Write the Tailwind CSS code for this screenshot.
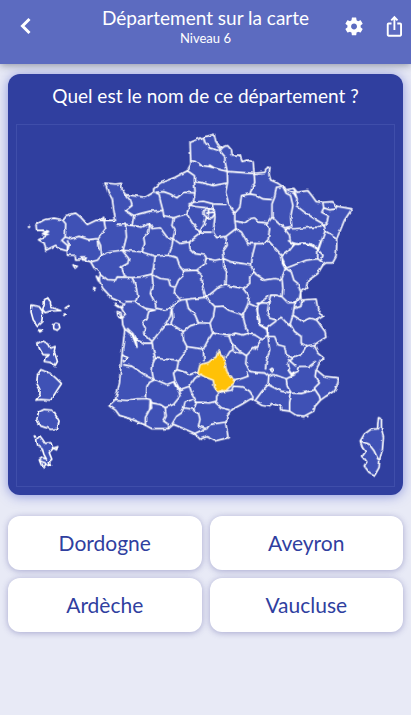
<!DOCTYPE html>
<html lang="fr">
<head>
    <meta charset="UTF-8">
    <meta name="viewport" content="width=device-width, initial-scale=1.0">
    <title>Département sur la carte</title>
    <script src="https://cdn.jsdelivr.net/npm/@tailwindcss/browser@4"></script>
</head>
<body class="min-h-screen bg-[#e8eaf6] font-['Lato','Noto_Sans',sans-serif]">
    <header class="relative grid h-16 grid-cols-[84px_1fr_84px] items-start bg-[#5c6bc0] text-white shadow-[0_1px_8px_rgba(40,50,70,0.5)]">
        <button type="button" aria-label="Retour" class="ml-3 mt-3 flex size-7 items-center justify-center">
            <svg class="size-7" viewBox="0 0 28 28" fill="none" stroke="currentColor" stroke-width="3"><path d="M17.5 7 10.5 14l7 7"/></svg>
        </button>
        <div class="pt-1.5 text-center whitespace-nowrap">
            <h1 class="text-[19px] leading-6">Département sur la carte</h1>
            <p class="text-[13px] leading-4">Niveau 6</p>
        </div>
        <div class="flex justify-end gap-4 pr-1 pt-3.5">
            <button type="button" aria-label="Réglages">
                <svg class="size-6" viewBox="0 0 24 24" fill="currentColor"><path transform="translate(0 1.4) scale(.92)" d="M19.14 12.94c.04-.3.06-.61.06-.94 0-.32-.02-.64-.07-.94l2.03-1.58c.18-.14.23-.41.12-.61l-1.92-3.32c-.12-.22-.37-.29-.59-.22l-2.39.96c-.5-.38-1.03-.7-1.62-.94l-.36-2.54c-.04-.24-.24-.41-.48-.41h-3.84c-.24 0-.43.17-.47.41l-.36 2.54c-.59.24-1.13.57-1.62.94l-2.39-.96c-.22-.08-.47 0-.59.22L2.74 8.87c-.12.21-.08.47.12.61l2.03 1.58c-.05.3-.09.63-.09.94s.02.64.07.94l-2.03 1.58c-.18.14-.23.41-.12.61l1.92 3.32c.12.22.37.29.59.22l2.39-.96c.5.38 1.03.7 1.62.94l.36 2.54c.05.24.24.41.48.41h3.84c.24 0 .44-.17.47-.41l.36-2.54c.59-.24 1.13-.56 1.62-.94l2.39.96c.22.08.47 0 .59-.22l1.92-3.32c.12-.22.07-.47-.12-.61l-2.01-1.58zM12 15.2c-1.77 0-3.2-1.43-3.2-3.2s1.43-3.2 3.2-3.2 3.2 1.43 3.2 3.2-1.43 3.2-3.2 3.2z"/></svg>
            </button>
            <button type="button" aria-label="Partager">
                <svg class="size-6" viewBox="0 0 24 24" fill="currentColor"><path transform="translate(0 .9) scale(.95)" d="m16 5-1.42 1.42-1.59-1.59V16h-1.98V4.83L9.42 6.42 8 5l4-4 4 4zm4 5v11c0 1.1-.9 2-2 2H6c-1.11 0-2-.9-2-2V10c0-1.11.89-2 2-2h3v2H6v11h12V10h-3V8h3c1.1 0 2 .89 2 2z"/></svg>
            </button>
        </div>
    </header>

    <main class="px-2 pt-2.5">
        <section class="rounded-xl bg-[#303f9f] p-2 shadow-[0_1px_12px_rgba(63,81,201,0.55)]">
            <h2 class="pt-px pb-4 text-center text-[19px] leading-[25px] text-white">Quel est le nom de ce département ?</h2>
            <svg class="w-full border border-[#3f4eaa]" viewBox="48 372 1137 1089" role="img" aria-label="Carte des départements français" stroke="#fff" stroke-width="5" stroke-linejoin="round" fill="none">
                <filter id="rough" x="-5%" y="-5%" width="110%" height="110%" color-interpolation-filters="sRGB">
                    <feTurbulence type="fractalNoise" baseFrequency="0.06" numOctaves="1" seed="4"/>
                    <feDisplacementMap in="SourceGraphic" scale="10" xChannelSelector="R" yChannelSelector="G"/>
                </filter>
                <g filter="url(#rough)">
                    <!-- mainland -->
                    <path fill="#3f51b5" d="M643 400 647 420 660 442 683 434 695 448 697 462 720 463 727 482 742 478 760 483 763 518 795 515 803 500 811 500 808 520 813 538 835 548 850 558 857 568 883 563 893 575 925 570 937 585 950 603 970 605 1000 603 1013 617 1058 625 1035 660 1025 685 1012 715 1012 740 1010 770 1000 788 980 788 970 795 955 820 925 842 920 865 903 878 905 900 950 897 955 925 970 950 952 960 977 995 980 1012 945 1035 955 1060 973 1075 963 1085 950 1110 975 1130 1018 1135 1015 1155 1003 1175 980 1190 963 1202 947 1220 943 1235 915 1250 890 1248 870 1235 847 1232 843 1220 815 1212 810 1222 787 1218 765 1205 753 1198 725 1215 697 1230 682 1250 678 1275 685 1315 645 1325 620 1312 600 1320 583 1302 555 1290 520 1275 505 1288 480 1288 455 1288 430 1275 395 1260 357 1248 345 1232 325 1218 345 1200 357 1150 363 1080 365 1060 373 988 367 975 365 955 375 945 363 925 370 910 335 895 307 865 295 840 300 820 280 802 270 785 250 778 225 780 223 765 200 765 200 752 175 745 165 735 135 750 130 728 113 718 140 705 125 700 142 692 123 690 107 690 105 672 130 658 160 653 185 658 195 645 225 638 240 650 260 672 285 660 310 660 345 660 340 630 335 595 323 575 313 547 345 550 363 548 365 568 375 582 435 590 460 575 460 565 480 547 525 530 562 510 572 490 570 425 610 408Z"/>
                    <!-- north-west -->
                    <g transform="translate(45 360)">
                        <path d="M330 222 345 240M265 300 270 325 255 345 245 360 250 390M140 298 150 310 148 350 165 355 190 348 220 358 245 355M148 350 138 360 155 375 155 390M38 318l3 1-2 2z"/>
                        <path d="M78 330 98 334 86 340 100 344M258 298l6-8 4 14"/>
                    </g>
                    <!-- north -->
                    <g transform="translate(435 360)">
                        <path d="M175 48 180 65 195 82 225 90 240 108 240 120 247 152M225 90 235 78M137 120 150 122 165 133 195 138 220 145 247 152 325 158M328 158 330 185 315 220 290 225 285 260 270 278M315 220 330 223M247 152 248 185 242 215 250 245 258 262 270 278M127 150 148 165 148 182 180 188 205 195 245 187M148 182 150 215 145 245 175 242 205 250 245 252M30 215 55 213 75 220 95 232 115 215 148 217M30 215 42 222 45 240 53 270M192 132 206 140"/>
                    </g>
                    <!-- north-east -->
                    <g transform="translate(765 360)">
                        <path d="M0 222 25 235 52 237M80 198 65 200 60 230 52 250 52 290M85 198 95 218 108 225 115 255 108 290 112 320M92 208 118 218 128 235M118 205 128 235 125 255 150 275 185 298 210 312M52 290 75 312 90 322 112 318M90 325 120 325 155 322 190 320 210 312M205 245 208 262 225 268 243 266 248 257M208 262 202 275 222 285 218 305 210 312 212 332 230 342 245 352M212 332 200 365 192 388M90 325 105 345 108 365 130 372 150 368 175 378 192 388M52 290 38 310 45 325 40 360M0 292 12 305 40 308M0 370 22 370 40 360 60 382 82 405M120 372 105 388"/>
                    </g>
                    <!-- west -->
                    <g transform="translate(45 720)">
                        <path d="M155 0 160 15 155 32M248 0 255 15 258 45 245 60 225 65M320 345 335 355 322 365"/>
                        <path d="M195 50 212 50 206 60ZM172 74 185 78 178 84ZM234 142l5 2-3 4ZM242 108 252 118 248 122ZM297 193 322 203 308 201ZM305 215 316 218 320 235 308 228Z"/>
                    </g>
                    <!-- centre and south, down to the Pyrenees -->
                    <g transform="translate(300 600)">
                        <path d="M90 0 95 15 75 30 100 45 125 38 150 32 188 30M100 45 95 75M48 75 75 72 95 75 125 80 148 70 155 85 180 82 200 110 218 115 225 90 215 75 220 52 260 40 268 15 280 5M188 30 190 45 220 52M260 40 278 70 298 95M218 115 240 130 268 125 300 100 298 95 310 75 320 50M300 95 335 95M265 12 285 18 320 22M340 12 345 50 340 95 350 112 378 108 408 85 405 60 405 38"/>
                        <path d="M312 30 326 25 340 27 345 40 336 52 322 52 312 42ZM318 38 342 35M326 26 324 50"/>
                        <path d="M75 72 78 110 68 150M148 70 145 95 130 110 133 130 125 155M0 170 20 155 65 150 95 152 125 155 165 168 205 165 215 140 218 115M408 62 435 68 450 55 465 52M408 85 425 95 445 130 467 130M268 125 270 145 285 160 315 165 320 175 345 180 370 175 368 155 382 135 378 108M205 165 230 172 240 200 250 212 290 210 315 190 318 172M370 175 395 185 430 190 455 195 458 165 467 130M455 195 462 215 468 220M370 175 372 200 380 215 378 255 430 265 450 250 450 230 462 215M290 210 305 225 308 260 318 292 340 275 355 262 378 255M250 212 250 225 235 240 225 262 222 280 242 300 285 295 318 292M165 168 160 200 155 222 180 235 205 238 210 256 225 262"/>
                        <path d="M65 150 85 175 82 190 62 200 72 225 70 232M0 222 20 238 45 240 50 230 95 232 120 230 155 222M95 232 108 265 112 290 105 305 75 305M155 222 158 250 150 280 165 310 168 325 195 330 215 325 222 310 242 300M105 305 135 325 165 330 145 335 140 355 125 365 135 385 130 400 155 425M215 325 210 350 190 380 155 425M215 325 218 355 210 375M258 297 265 325 285 345 295 368 330 370M318 292 345 320 340 350 330 370 338 400M190 375 215 372 225 380 250 395 270 378 295 370M345 320 370 318 385 330 430 345 435 375 445 400 430 405 405 400 385 408 338 400M430 265 448 290 445 310 430 345M445 310 470 320 475 350 480 375 500 388M445 402 467 405M507 287 475 315"/>
                        <path d="M155 425 158 445 165 475 190 478 225 480 235 485 258 455 260 440 250 420 248 395M258 440 290 445 310 448 322 425 338 400M385 402 395 430 400 450 390 455 378 475M235 485 230 510 255 518 270 525 295 515M310 448 312 485M155 430 130 430 105 415M70 385 95 405 110 442 107 422 98 402 80 385M68 495 95 500 140 530 160 540 155 515 158 490 165 475M45 600 80 603 110 598 138 597 140 560 148 548 165 540 200 555 225 545 220 520 230 510M138 597 150 600 155 610 180 615 195 625 220 615 240 590 235 570 222 545"/>
                        <path d="M150 600 148 630 135 655 135 680M152 606 154 626 148 630M195 625 198 650 190 665 205 675 205 690M225 545 240 570 268 560 285 535 300 528M268 560 275 580 290 608 330 610 350 605 350 590 360 578M290 608 280 630 250 625 245 640 230 650 215 675M275 628 295 640 300 660 295 680 320 688 330 675 380 668M280 600 255 608 250 625M345 608 365 625 390 632M280 705 300 695 320 688M360 578 395 572 400 560 430 562 450 575 460 590 458 602M400 545 430 535 445 530 440 518M395 430 420 455 440 468 460 445 467 440M440 468 438 490 450 515 467 518M425 460 400 455"/>
                    </g>
                    <!-- east -->
                    <g transform="translate(765 720)">
                        <path d="M80 48 105 30 118 12 100 0M118 12 145 8 175 12 190 28 190 55M80 48 88 65 92 85 125 72 155 60 190 55 205 68M190 28 200 0M190 28 206 45 200 60M92 85 110 95 118 120 130 130 138 155M92 85 82 115 85 145 82 170 100 188 120 188 135 175M0 100 30 120 60 115 82 118M82 45 84 70 92 85M82 170 65 165 48 165 42 190 38 220 45 235 65 240 80 232 105 258M42 190 28 188 10 190 8 215 15 240 15 255 35 265 65 243M138 158 135 175 120 195 115 225 105 258M120 205 138 200 142 185 150 182M115 225 130 235 145 245 165 235 187 240M105 250 120 275 140 290 140 310 155 318 180 315M35 265 40 290 60 290 70 315 90 320 95 345 115 355 140 345 155 318M0 285 20 298 40 285M40 265 40 290 45 330 35 365 32 390M20 298 0 330M115 355 100 370 105 390M100 358 125 380"/>
                    </g>
                    <!-- south-east -->
                    <g transform="translate(765 1080)">
                        <path d="M0 38 30 40 42 50 40 75 22 95 0 125M42 50 60 45 95 58 98 80 110 100 80 95 40 75M46 30 52 26 58 32 54 38ZM110 100 105 130 105 155M110 100 140 102 165 95 182 90 195 110 198 122M185 30 182 50 195 70 180 85 182 90M105 30 100 30 110 45 130 35 135 20 165 20 185 5M95 58 120 45 116 36M140 174 150 176M156 172 162 170"/>
                        <path fill="#3f51b5" d="M373 175 382 177 382 205 388 235 385 270 377 300 375 325 362 348 345 340 330 320 338 308 325 290 334 278 325 265 318 245 330 225 350 210 370 208Z"/>
                        <path d="M318 245 345 255 360 275 372 300 377 300"/>
                    </g>
                    <!-- overseas -->
                    <g transform="translate(45 720)" fill="#3f51b5">
                        <path d="M48 195 70 200 80 215 78 245 65 257 52 240 45 215ZM85 195 85 180 95 172 103 185 105 197 125 208 135 212 105 213 88 218 80 208ZM148 204 160 197 156 203ZM142 222 148 223 145 226ZM113 255 120 250 130 253 132 264 124 271 114 267ZM68 270 80 271 72 276Z"/>
                        <path d="M65 310 80 303 98 312 105 325 118 320 115 335 125 365 118 377 105 368 85 365 88 352 100 345 82 345 70 325Z"/>
                        <path d="M75 390 105 402 120 415 137 432 125 450 105 482 75 480 60 482 72 465 72 450 62 430 65 405ZM85 510 110 512 120 528 130 545 125 568 105 570 75 560 62 540 68 518Z"/>
                        <path d="M62 600 72 590 80 600 88 612 105 610 112 628 100 640 108 660 100 668 104 680 90 675 82 686 75 675 70 662 80 655 92 660 84 645 78 625 65 618ZM112 627 126 622 122 632ZM55 590 60 592 57 594ZM72 665 90 672"/>
                    </g>
                    <!-- highlighted: Aveyron -->
                    <path fill="#ffc107" stroke="#fff3d0" d="M655 1053 664 1068 670 1070 675 1085 678 1105 685 1125 694 1130 705 1148 690 1162 677 1175 670 1172 655 1178 643 1162 640 1142 615 1132 593 1120 600 1095 625 1088 635 1080 648 1072Z"/>
                </g>
            </svg>
        </section>

        <div class="mt-[21px] grid grid-cols-2 gap-2 text-[21px] text-[#303f9f]">
            <button type="button" class="h-[54px] rounded-xl bg-white shadow-[0_1px_6px_rgba(70,70,150,0.4)]">Dordogne</button>
            <button type="button" class="h-[54px] rounded-xl bg-white shadow-[0_1px_6px_rgba(70,70,150,0.4)]">Aveyron</button>
            <button type="button" class="h-[54px] rounded-xl bg-white shadow-[0_1px_6px_rgba(70,70,150,0.4)]">Ardèche</button>
            <button type="button" class="h-[54px] rounded-xl bg-white shadow-[0_1px_6px_rgba(70,70,150,0.4)]">Vaucluse</button>
        </div>
    </main>
</body>
</html>
